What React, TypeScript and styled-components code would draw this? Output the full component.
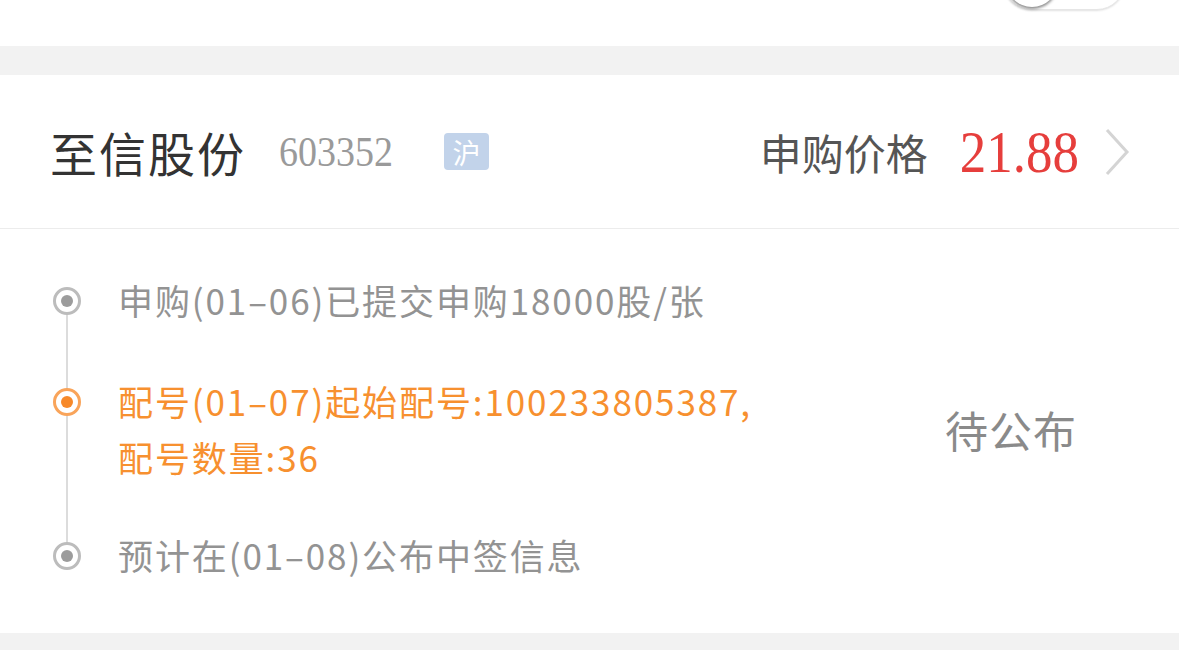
import React from 'react';
import styled, { createGlobalStyle } from 'styled-components';

const GlobalStyle = createGlobalStyle`
  html, body {
    margin: 0;
    padding: 0;
    background: #f2f2f2;
  }
  body {
    font-family: "Noto Sans CJK SC", "Noto Sans", sans-serif;
  }
`;

const Page = styled.div`
  width: 1179px;
  height: 650px;
  overflow: hidden;
  background: #f2f2f2;
`;

const TopBar = styled.div`
  height: 46px;
  background: #fff;
  overflow: hidden;
  display: flex;
  justify-content: flex-end;
  padding-right: 54px;
`;

const Switch = styled.div`
  width: 120px;
  height: 56px;
  margin-top: -48px;
  border-radius: 28px;
  background: #fff;
  box-shadow: 0 1px 2px rgba(0, 0, 0, 0.12);
  border: 1px solid #e6e6e6;
  position: relative;
`;

const Knob = styled.div`
  position: absolute;
  left: 2px;
  top: 2px;
  width: 52px;
  height: 52px;
  border-radius: 50%;
  background: #fff;
  box-shadow: 0 2px 3px rgba(0, 0, 0, 0.45);
`;

const Card = styled.div`
  margin-top: 29px;
  background: #fff;
`;

const Header = styled.div`
  height: 153px;
  display: flex;
  align-items: center;
  padding: 0 48px 0 50px;
  border-bottom: 1px solid #ececec;
`;

const Name = styled.span`
  font-size: 47px;
  color: #333;
  letter-spacing: 2px;
  line-height: 1;
`;

const Code = styled.span`
  font-family: "Liberation Serif", serif;
  font-size: 38px;
  color: #9a9a9a;
  margin-left: 33px;
  display: inline-block;
  transform: scaleY(1.1);
`;

const Badge = styled.span`
  margin-left: 51px;
  width: 45px;
  height: 37px;
  border-radius: 4px;
  background: #c2d3ea;
  color: #fff;
  font-size: 28px;
  display: flex;
  align-items: center;
  justify-content: center;
`;

const Spacer = styled.div`
  flex: 1;
`;

const PriceLabel = styled.span`
  font-size: 42px;
  color: #555;
  line-height: 1;
`;

const Price = styled.span`
  font-family: "Liberation Serif", serif;
  font-size: 53px;
  color: #e63e3c;
  margin-left: 32px;
  display: inline-block;
  transform: scaleY(1.1);
`;

const Chevron = styled.svg`
  margin-left: 24px;
  width: 28px;
  height: 50px;
`;

const Timeline = styled.div`
  position: relative;
  padding: 48px 0 45px 53px;
  height: 404px;
  box-sizing: border-box;
  display: flex;
  flex-direction: column;
`;

const Rail = styled.div`
  position: absolute;
  left: 66px;
  top: 84px;
  width: 2px;
  height: 236px;
  background: #dcdcdc;
`;

const Step = styled.div<{ $gap: number }>`
  display: flex;
  align-items: flex-start;
  margin-top: ${(p) => p.$gap}px;
  position: relative;
`;

const Dot = styled.span<{ $active?: boolean }>`
  flex: none;
  width: 28px;
  height: 28px;
  box-sizing: border-box;
  border-radius: 50%;
  border: 3px solid ${(p) => (p.$active ? '#f9a45a' : '#bcbcbc')};
  background: #fff;
  display: flex;
  align-items: center;
  justify-content: center;
  margin-top: 10px;
  position: relative;
  z-index: 1;
  &::after {
    content: '';
    width: 12px;
    height: 12px;
    border-radius: 50%;
    background: ${(p) => (p.$active ? '#f7892a' : '#9c9c9c')};
  }
`;

const StepText = styled.div<{ $active?: boolean }>`
  margin-left: 37px;
  margin-top: -5px;
  font-size: 35px;
  letter-spacing: 1.9px;
  line-height: 56px;
  color: ${(p) => (p.$active ? '#f7902f' : '#939393')};
  flex: 1;
`;

const Status = styled.div`
  font-size: 43px;
  letter-spacing: 1px;
  color: #8a8a8a;
  margin-right: 102px;
  margin-bottom: 6px;
  align-self: center;
`;

const Footer = styled.div`
  height: 17px;
  background: #f2f2f2;
`;

const App: React.FC = () => {
  return (
    <Page>
      <GlobalStyle />
      <TopBar>
        <Switch>
          <Knob />
        </Switch>
      </TopBar>
      <Card>
        <Header>
          <Name>至信股份</Name>
          <Code>603352</Code>
          <Badge>沪</Badge>
          <Spacer />
          <PriceLabel>申购价格</PriceLabel>
          <Price>21.88</Price>
          <Chevron viewBox="0 0 28 50">
            <polyline points="4,3 24,25 4,47" fill="none" stroke="#d4d4d4" strokeWidth="3" strokeLinejoin="miter" />
          </Chevron>
        </Header>
        <Timeline>
          <Rail />
          <Step $gap={0}>
            <Dot />
            <StepText>申购(01–06)已提交申购18000股/张</StepText>
          </Step>
          <Step $gap={50}>
            <Dot $active />
            <StepText $active>
              配号(01–07)起始配号:100233805387,
              <br />
              配号数量:36
            </StepText>
            <Status>待公布</Status>
          </Step>
          <Step $gap={47}>
            <Dot />
            <StepText>预计在(01–08)公布中签信息</StepText>
          </Step>
        </Timeline>
      </Card>
      <Footer />
    </Page>
  );
};

export default App;
